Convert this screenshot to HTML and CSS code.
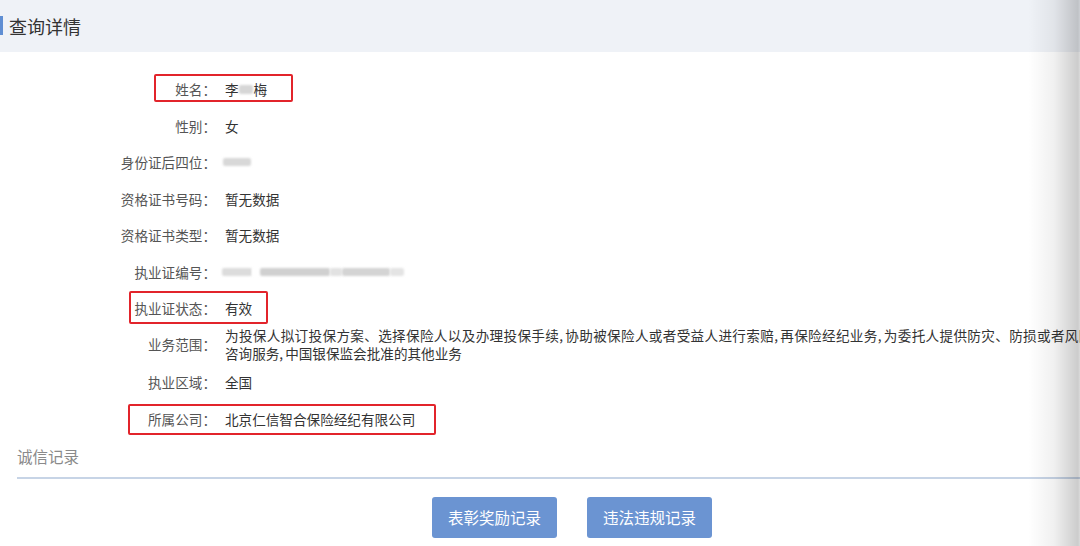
FILE: index.html
```html
<!DOCTYPE html>
<html lang="zh-CN">
<head>
<meta charset="utf-8">
<title>查询详情</title>
<link rel="stylesheet" href="styles.css">
</head>
<body>
<div class="page">
  <header class="header"><h1 class="title">查询详情</h1></header>
  <section class="details">
    <div class="row">
      <div class="label">姓名：</div>
      <div class="value">李<span class="blur blur-name"></span>梅</div>
      <div class="mark mark-name"></div>
    </div>
    <div class="row">
      <div class="label">性别：</div>
      <div class="value">女</div>
    </div>
    <div class="row">
      <div class="label">身份证后四位：</div>
      <div class="value"><span class="blur blur-id"></span></div>
    </div>
    <div class="row">
      <div class="label">资格证书号码：</div>
      <div class="value">暂无数据</div>
    </div>
    <div class="row">
      <div class="label">资格证书类型：</div>
      <div class="value">暂无数据</div>
    </div>
    <div class="row">
      <div class="label">执业证编号：</div>
      <div class="value blurs">
        <span class="blur b1"></span><span class="blur b2"></span><span class="blur b3"></span><span class="blur b4"></span><span class="blur b5"></span><span class="blur b6"></span>
      </div>
    </div>
    <div class="row">
      <div class="label">执业证状态：</div>
      <div class="value">有效</div>
      <div class="mark mark-status"></div>
    </div>
    <div class="row row-scope">
      <div class="label">业务范围：</div>
      <div class="value scope">
        <span class="line line1">为投保人拟订投保方案、选择保险人以及办理投保手续,<span class="cm"></span>协助被保险人或者受益人进行索赔,<span class="cm"></span>再保险经纪业务,<span class="cm"></span>为委托人提供防灾、防损或者风险</span>
        <span class="line">咨询服务,<span class="cm"></span>中国银保监会批准的其他业务</span>
      </div>
    </div>
    <div class="row">
      <div class="label">执业区域：</div>
      <div class="value">全国</div>
    </div>
    <div class="row">
      <div class="label">所属公司：</div>
      <div class="value">北京仁信智合保险经纪有限公司</div>
      <div class="mark mark-company"></div>
    </div>
  </section>
  <section class="credit">
    <h2 class="credit-title">诚信记录</h2>
    <div class="actions">
      <button class="btn">表彰奖励记录</button>
      <button class="btn">违法违规记录</button>
    </div>
  </section>
  <div class="edge-right"></div>
</div>
</body>
</html>
```

FILE: styles.css
```css
* { box-sizing: border-box; }
html, body {
  margin: 0;
  padding: 0;
  background: #ffffff;
  overflow: hidden;
}
body {
  font-family: "Noto Sans CJK SC", "Noto Sans", sans-serif;
  color: #333;
}
.page {
  position: relative;
  width: 1080px;
  height: 546px;
  overflow: hidden;
}
.header {
  height: 52px;
  background: #eff2f7;
  display: flex;
  align-items: center;
}
.title {
  margin: 0;
  font-size: 18px;
  font-weight: 400;
  color: #333;
  display: flex;
  align-items: center;
  line-height: 20px;
  padding-bottom: 1px;
}
.title::before {
  content: "";
  display: block;
  width: 3px;
  height: 19px;
  background: #5f8ed3;
  margin-right: 6px;
}
.details {
  padding-top: 18.75px;
}
.row {
  position: relative;
  display: flex;
  height: 36.5px;
  align-items: center;
  font-size: 13.6px;
  line-height: 18px;
}
.label {
  width: 216px;
  flex: none;
  text-align: right;
  color: #555;
}
.value {
  margin-left: 9px;
  color: #333;
  white-space: nowrap;
  display: flex;
  align-items: center;
}
.row-scope {
  height: auto;
  align-items: center;
  padding-bottom: 1.5px;
}
.scope {
  display: flex;
  flex-direction: column;
  align-items: flex-start;
}
.line { display: block; white-space: nowrap; }
.line1 { letter-spacing: 0.33px; }
.cm { display: inline-block; width: 2px; }

.blur {
  display: inline-block;
  background: #d6d6d6;
  filter: blur(1.2px);
  border-radius: 2px;
}
.blur-name { width: 14px; height: 9px; margin: 0 1px 0 0; }
.blur-id { width: 28px; height: 8px; background: #d8d8d8; margin-left: -2px; }
.blurs { gap: 0; margin-left: 6px; }
.b1 { width: 30px; height: 8px; background: #dcdcdc; }
.b2 { width: 8px; height: 8px; background: #fff; }
.b3 { width: 70px; height: 8px; background: #d0d0d0; }
.b4 { width: 12px; height: 8px; background: #e2e2e2; }
.b5 { width: 48px; height: 8px; background: #d4d4d4; }
.b6 { width: 14px; height: 8px; background: #e4e4e4; }

.mark {
  position: absolute;
  border: 2px solid #e2242b;
  border-radius: 2px;
}
.mark-name { left: 154px; top: 3.25px; width: 139px; height: 28px; }
.mark-status { left: 129px; top: 1.25px; width: 139px; height: 33px; }
.mark-company { left: 128px; top: 4px; width: 308px; height: 31px; }

.credit {
  padding-top: 8px;
}
.credit-title {
  margin: 0 0 0 17px;
  font-size: 15.5px;
  font-weight: 400;
  color: #8a8a8a;
  line-height: 22px;
  padding-bottom: 10px;
  border-bottom: 2px solid #c7d4e6;
}
.actions {
  display: flex;
  justify-content: center;
  gap: 30px;
  padding-left: 64px;
  padding-top: 18px;
}
.btn {
  width: 125px;
  height: 41px;
  border: none;
  border-radius: 3px;
  background: #6b94d2;
  color: #fff;
  font-family: "Noto Sans CJK SC", "Noto Sans", sans-serif;
  font-size: 15.5px;
  padding: 0;
}
.edge-right {
  position: absolute;
  top: 0;
  right: 0;
  width: 52px;
  height: 100%;
  background: linear-gradient(to right, rgba(0,0,0,0) 0%, rgba(0,0,0,0.06) 50%, rgba(0,0,0,0.2) 96%, rgba(0,0,0,0.14) 100%);
  pointer-events: none;
}
```
